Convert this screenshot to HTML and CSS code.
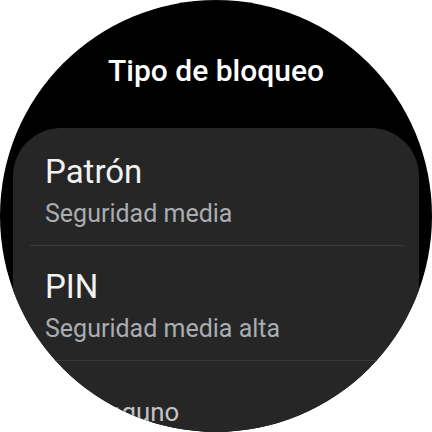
FILE: index.html
```html
<!DOCTYPE html>
<html lang="es">
<head>
<meta charset="utf-8">
<title>Tipo de bloqueo</title>
<link rel="stylesheet" href="styles.css">
</head>
<body>
<div class="watch">
  <h1 class="title">Tipo de bloqueo</h1>
  <div class="card">
    <div class="row">
      <div class="row-title">Patrón</div>
      <div class="row-sub">Seguridad media</div>
    </div>
    <div class="row">
      <div class="row-title">PIN</div>
      <div class="row-sub">Seguridad media alta</div>
    </div>
    <div class="row row--far">
      <div class="row-title">Ninguno</div>
    </div>
  </div>
</div>
</body>
</html>
```
FILE: styles.css
```css
html, body {
  margin: 0;
  padding: 0;
  background: #ffffff;
}
body {
  font-family: Roboto, "Noto Sans", sans-serif;
}
.watch {
  width: 432px;
  height: 432px;
  border-radius: 50%;
  background: #000000;
  overflow: hidden;
  display: flex;
  flex-direction: column;
}
.title {
  margin: 55px 0 0 0;
  font-size: 30px;
  line-height: 32px;
  font-weight: 500;
  color: #ffffff;
  text-align: center;
}
.card {
  margin: 41px 13px 0 13px;
  padding-top: 3px;
  flex: 1;
  background: #262626;
  border-radius: 48px 48px 0 0;
}
.row {
  margin: 0 16px 0 17px;
  padding: 22px 0 16px 15px;
  border-bottom: 1px solid #3a3a3a;
}
.row-title {
  font-size: 33px;
  line-height: 38px;
  color: #f2f2f2;
}
.row-sub {
  margin-top: 8px;
  font-size: 25px;
  line-height: 30px;
  color: #a9adb1;
}
.row--far {
  border-bottom: none;
  padding-top: 47px;
  transform: scale(0.78);
  transform-origin: 50% 0;
}
.row--far .row-title {
  color: #c4c4c4;
}
```
